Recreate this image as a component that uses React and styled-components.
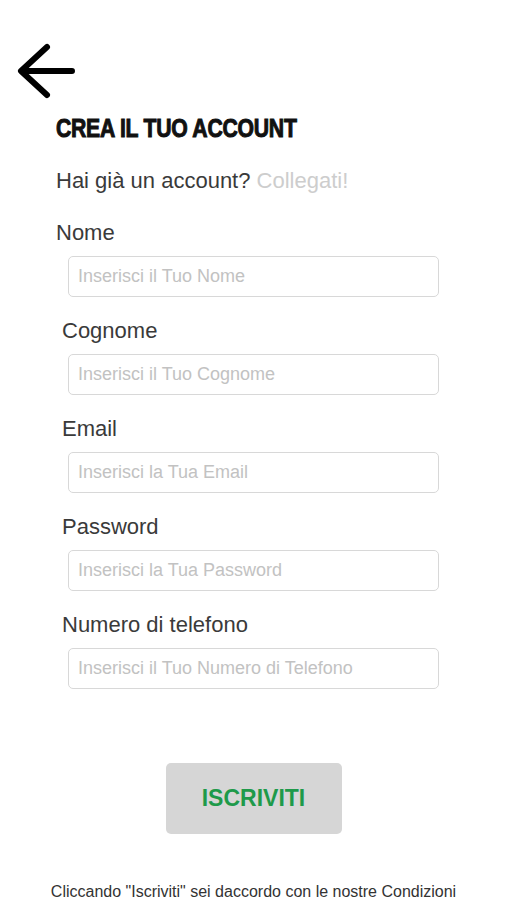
import styled, { createGlobalStyle } from 'styled-components';

const GlobalStyle = createGlobalStyle`
  body {
    margin: 0;
    background: #ffffff;
    font-family: "Liberation Sans", Arial, sans-serif;
  }
`;

const Page = styled.div`
  width: 507px;
  height: 900px;
  display: flex;
  flex-direction: column;
`;

const BackButton = styled.button`
  align-self: flex-start;
  margin: 42px 0 0 16px;
  padding: 0;
  border: none;
  background: none;
  width: 60px;
  height: 60px;
  cursor: pointer;
`;

const Content = styled.div`
  display: flex;
  flex-direction: column;
  padding: 0 68px 0 56px;
`;

const Title = styled.h1`
  margin: 13px 0 0;
  font-family: "Liberation Sans", Arial, sans-serif;
  font-weight: 700;
  font-size: 26px;
  line-height: 26px;
  letter-spacing: -0.3px;
  color: #111;
  -webkit-text-stroke: 1px #111;
  transform: scaleX(0.815);
  transform-origin: left center;
  white-space: nowrap;
`;

const LoginLine = styled.p`
  margin: 27px 0 0;
  font-size: 22px;
  line-height: 26px;
  color: #3a3a3a;
`;

const LoginLink = styled.a`
  color: #cdcdcd;
  text-decoration: none;
  cursor: pointer;
`;

const Field = styled.div`
  display: flex;
  flex-direction: column;
  margin-top: ${(p) => (p.first ? 26 : 21)}px;
`;

const Label = styled.label`
  font-size: 22px;
  line-height: 26px;
  color: #3a3a3a;
  padding-left: ${(p) => (p.first ? 0 : 6)}px;
`;

const Input = styled.input`
  box-sizing: border-box;
  margin: 10px 0 0 12px;
  height: 41px;
  width: 371px;
  padding: 0 9px;
  border: 1px solid #d8d8d8;
  border-radius: 5px;
  font-family: "Liberation Sans", Arial, sans-serif;
  font-size: 18px;
  color: #333;
  outline: none;

  &::placeholder {
    color: #c2c2c2;
  }
`;

const SubmitButton = styled.button`
  align-self: center;
  margin-top: 74px;
  width: 176px;
  height: 72px;
  border: none;
  border-radius: 5px;
  background: #d6d6d6;
  color: #1e9a4a;
  font-family: "Liberation Sans", Arial, sans-serif;
  font-weight: 700;
  font-size: 23px;
  cursor: pointer;
`;

const Terms = styled.p`
  margin: 50px 0 0;
  text-align: center;
  font-size: 16px;
  line-height: 16px;
  color: #333;
  white-space: nowrap;
`;

const fields = [
  { label: 'Nome', placeholder: 'Inserisci il Tuo Nome', type: 'text' },
  { label: 'Cognome', placeholder: 'Inserisci il Tuo Cognome', type: 'text' },
  { label: 'Email', placeholder: 'Inserisci la Tua Email', type: 'email' },
  { label: 'Password', placeholder: 'Inserisci la Tua Password', type: 'password' },
  { label: 'Numero di telefono', placeholder: 'Inserisci il Tuo Numero di Telefono', type: 'tel' },
];

const App = () => {
  return (
    <Page>
      <GlobalStyle />
      <BackButton aria-label="Indietro">
        <svg width="60" height="60" viewBox="0 0 60 60" fill="none">
          <path
            d="M56 29 H6 M31 5 L5 29 L31 53"
            stroke="#000"
            strokeWidth="6"
            strokeLinecap="round"
            strokeLinejoin="round"
          />
        </svg>
      </BackButton>
      <Content>
        <Title>CREA IL TUO ACCOUNT</Title>
        <LoginLine>
          Hai già un account? <LoginLink>Collegati!</LoginLink>
        </LoginLine>
        {fields.map((f, i) => (
          <Field key={f.label} first={i === 0}>
            <Label first={i === 0}>{f.label}</Label>
            <Input type={f.type} placeholder={f.placeholder} />
          </Field>
        ))}
      </Content>
      <SubmitButton>ISCRIVITI</SubmitButton>
      <Terms>Cliccando "Iscriviti" sei daccordo con le nostre Condizioni</Terms>
    </Page>
  );
};

export default App;
